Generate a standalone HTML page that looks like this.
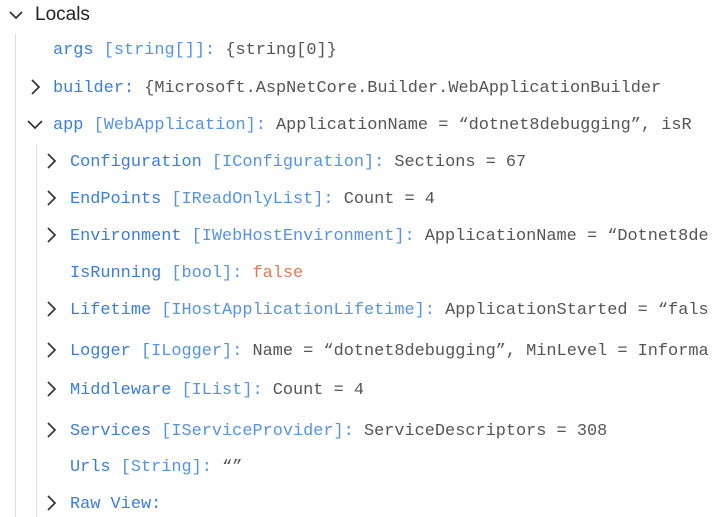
<!DOCTYPE html>
<html><head><meta charset="utf-8"><style>
body{margin:0;width:727px;height:517px;overflow:hidden;background:#fff;position:relative;font-family:"Liberation Mono",monospace;font-size:16.9px}
.r{position:absolute;white-space:nowrap;line-height:20px}
.n{color:#3a7de0}.t{color:#5592ea}.v{color:#555}.f{color:#e07a4f}
.l{position:absolute;width:1px;background:#dedede}
svg{position:absolute}
</style></head><body>
<div class="l" style="left:15px;top:34px;height:483px"></div>
<div class="l" style="left:36px;top:144px;height:373px"></div>
<svg style="left:8px;top:7px" width="16" height="16"><path d="M2 5l6 6 6-6" fill="none" stroke="#333" stroke-width="1.7"/></svg>
<div class="r" style="left:35px;top:5px;font-family:'Liberation Sans',sans-serif;font-size:19px;color:#222">Locals</div>

<div class="r" style="left:53px;top:41px"><span class="n">args</span> <span class="t">[string[]]:</span> <span class="v">{string[0]}</span></div>

<svg style="left:28px;top:79px" width="16" height="16"><path d="M4 1l7 7-7 7" fill="none" stroke="#333" stroke-width="1.7"/></svg>
<div class="r" style="left:53px;top:79px"><span class="n">builder:</span> <span class="v">{Microsoft.AspNetCore.Builder.WebApplicationBuilder</span></div>

<svg style="left:27px;top:116px" width="16" height="16"><path d="M1 5l7 7 7-7" fill="none" stroke="#333" stroke-width="1.7"/></svg>
<div class="r" style="left:53px;top:116px"><span class="n">app</span> <span class="t">[WebApplication]:</span> <span class="v">ApplicationName = “dotnet8debugging”, isR</span></div>

<svg style="left:44px;top:153px" width="16" height="16"><path d="M4 1l7 7-7 7" fill="none" stroke="#333" stroke-width="1.7"/></svg>
<div class="r" style="left:70px;top:153px"><span class="n">Configuration</span> <span class="t">[IConfiguration]:</span> <span class="v">Sections = 67</span></div>

<svg style="left:44px;top:190px" width="16" height="16"><path d="M4 1l7 7-7 7" fill="none" stroke="#333" stroke-width="1.7"/></svg>
<div class="r" style="left:70px;top:190px"><span class="n">EndPoints</span> <span class="t">[IReadOnlyList]:</span> <span class="v">Count = 4</span></div>

<svg style="left:44px;top:227px" width="16" height="16"><path d="M4 1l7 7-7 7" fill="none" stroke="#333" stroke-width="1.7"/></svg>
<div class="r" style="left:70px;top:227px"><span class="n">Environment</span> <span class="t">[IWebHostEnvironment]:</span> <span class="v">ApplicationName = “Dotnet8de</span></div>

<div class="r" style="left:70px;top:264px"><span class="n">IsRunning</span> <span class="t">[bool]:</span> <span class="f">false</span></div>

<svg style="left:44px;top:301px" width="16" height="16"><path d="M4 1l7 7-7 7" fill="none" stroke="#333" stroke-width="1.7"/></svg>
<div class="r" style="left:70px;top:301px"><span class="n">Lifetime</span> <span class="t">[IHostApplicationLifetime]:</span> <span class="v">ApplicationStarted = “fals</span></div>

<svg style="left:44px;top:342px" width="16" height="16"><path d="M4 1l7 7-7 7" fill="none" stroke="#333" stroke-width="1.7"/></svg>
<div class="r" style="left:70px;top:342px"><span class="n">Logger</span> <span class="t">[ILogger]:</span> <span class="v">Name = “dotnet8debugging”, MinLevel = Informa</span></div>

<svg style="left:44px;top:381px" width="16" height="16"><path d="M4 1l7 7-7 7" fill="none" stroke="#333" stroke-width="1.7"/></svg>
<div class="r" style="left:70px;top:381px"><span class="n">Middleware</span> <span class="t">[IList]:</span> <span class="v">Count = 4</span></div>

<svg style="left:44px;top:422px" width="16" height="16"><path d="M4 1l7 7-7 7" fill="none" stroke="#333" stroke-width="1.7"/></svg>
<div class="r" style="left:70px;top:422px"><span class="n">Services</span> <span class="t">[IServiceProvider]:</span> <span class="v">ServiceDescriptors = 308</span></div>

<div class="r" style="left:70px;top:458px"><span class="n">Urls</span> <span class="t">[String]:</span> <span class="v">“”</span></div>

<svg style="left:44px;top:495px" width="16" height="16"><path d="M4 1l7 7-7 7" fill="none" stroke="#333" stroke-width="1.7"/></svg>
<div class="r" style="left:70px;top:495px"><span class="n">Raw View:</span></div>
</body></html>
